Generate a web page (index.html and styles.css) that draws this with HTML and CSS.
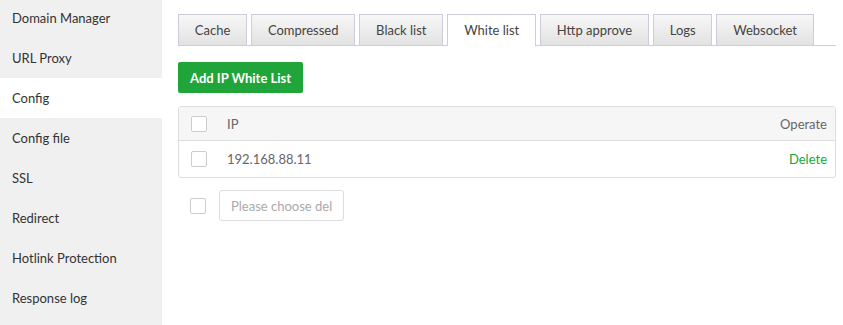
FILE: index.html
```html
<!DOCTYPE html>
<html lang="en">
<head>
    <meta charset="UTF-8">
    <title>Config</title>
    <link rel="stylesheet" href="styles.css">
</head>
<body>
    <div class="layout">
        <ul class="side-menu">
            <li>Domain Manager</li>
            <li>URL Proxy</li>
            <li class="active">Config</li>
            <li>Config file</li>
            <li>SSL</li>
            <li>Redirect</li>
            <li>Hotlink Protection</li>
            <li>Response log</li>
        </ul>

        <div class="main">
            <div class="tabs">
                <span class="tab">Cache</span>
                <span class="tab">Compressed</span>
                <span class="tab">Black list</span>
                <span class="tab on">White list</span>
                <span class="tab">Http approve</span>
                <span class="tab">Logs</span>
                <span class="tab">Websocket</span>
            </div>

            <button class="btn-green">Add IP White List</button>

            <div class="table-box">
                <div class="row head">
                    <span class="check"></span>
                    <span class="col-ip">IP</span>
                    <span class="col-op">Operate</span>
                </div>
                <div class="row">
                    <span class="check"></span>
                    <span class="col-ip">192.168.88.11</span>
                    <span class="col-op"><a class="link-green">Delete</a></span>
                </div>
            </div>

            <div class="batch">
                <span class="check"></span>
                <button class="btn-plain">Please choose del</button>
            </div>
        </div>
    </div>
</body>
</html>
```

FILE: styles.css
```css
body {
    margin: 0;
    font-family: Lato, "Noto Sans", sans-serif;
    font-size: 13px;
    color: #555;
    background: #fff;
}

.layout {
    display: flex;
    height: 325px;
    overflow: hidden;
}

.side-menu {
    list-style: none;
    margin: 0;
    padding: 0;
    width: 162px;
    flex-shrink: 0;
    background: #f0f0f0;
}

.side-menu li {
    height: 40px;
    line-height: 40px;
    padding-left: 12px;
    color: #333;
    white-space: nowrap;
}

.side-menu li:first-child {
    margin-top: -2px;
}

.side-menu li.active {
    background: #fff;
}

.main {
    flex: 1;
    padding: 14px 7px 0 16px;
}

.tabs {
    display: flex;
    gap: 4px;
    border-bottom: 1px solid #ccccdd;
    height: 31px;
}

.tab {
    flex-shrink: 0;
    white-space: nowrap;
    height: 30px;
    line-height: 30px;
    padding: 0 15.8px;
    border: 1px solid #ccccdd;
    border-bottom: none;
    background: linear-gradient(#f7f7f7, #e2e2e2);
    color: #444;
}

.tab.on {
    background: #fff;
    height: 31px;
}

.btn-green {
    display: block;
    margin-top: 16px;
    height: 31px;
    padding: 0 12px;
    border: none;
    border-radius: 2px;
    background: #20a53a;
    color: #fff;
    font-family: inherit;
    font-size: 13px;
    font-weight: 700;
}

.table-box {
    margin-top: 13px;
    border: 1px solid #ddd;
    border-radius: 3px;
    overflow: hidden;
}

.row {
    display: flex;
    align-items: center;
    height: 36px;
    padding: 0 8px 0 12px;
    color: #666;
}

.row.head {
    height: 33px;
    background: #f6f6f6;
    border-bottom: 1px solid #ddd;
}

.check {
    display: inline-block;
    width: 14px;
    height: 14px;
    border: 1px solid #ccc;
    border-radius: 2px;
    background: #fff;
}

.col-ip {
    flex: 1;
    margin-left: 20px;
}

.col-op {
    text-align: right;
}

.link-green {
    color: #20a53a;
}

.batch {
    display: flex;
    align-items: center;
    gap: 13px;
    margin-top: 12px;
    padding-left: 12px;
}

.btn-plain {
    height: 31px;
    padding: 0 11px;
    border: 1px solid #ddd;
    border-radius: 3px;
    background: #fff;
    color: #aaa;
    font-family: inherit;
    font-size: 13px;
}
```
